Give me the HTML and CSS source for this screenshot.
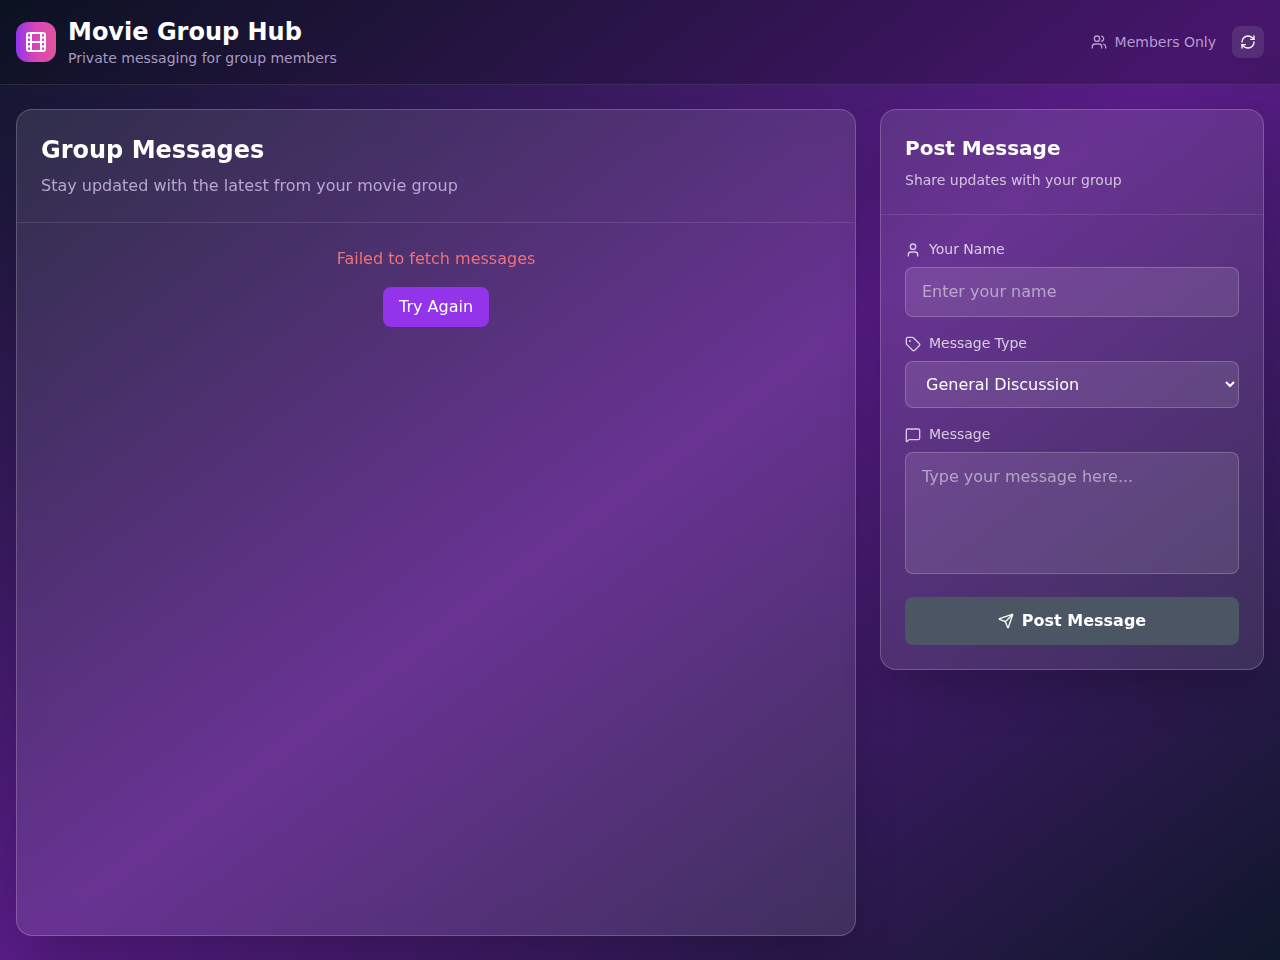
FILE: index.html
```html
<!DOCTYPE html>
<html lang="en">
<head>
<meta charset="utf-8">
<meta name="viewport" content="width=device-width, initial-scale=1">
<title>Movie Group Hub</title>
<link rel="stylesheet" href="styles.css">
</head>
<body>
<div class="page">
  <header class="topbar">
    <div class="topbar-inner">
      <div class="brand">
        <div class="logo">
          <svg class="icon icon-lg" viewBox="0 0 24 24" aria-hidden="true"><rect width="18" height="18" x="3" y="3" rx="2"/><path d="M7 3v18M3 7.500h4M3 12h18M3 16.500h4M17 3v18M17 7.500h4M17 16.500h4"/></svg>
        </div>
        <div>
          <h1 class="brand-title">Movie Group Hub</h1>
          <p class="brand-subtitle">Private messaging for group members</p>
        </div>
      </div>
      <div class="actions">
        <div class="members">
          <svg class="icon" viewBox="0 0 24 24" aria-hidden="true"><path d="M16 21v-2a4 4 0 0 0-4-4H6a4 4 0 0 0-4 4v2"/><circle cx="9" cy="7" r="4"/><path d="M22 21v-2a4 4 0 0 0-3-3.870"/><path d="M16 3.130a4 4 0 0 1 0 7.750"/></svg>
          <span>Members Only</span>
        </div>
        <button class="refresh" type="button" aria-label="Refresh">
          <svg class="icon" viewBox="0 0 24 24" aria-hidden="true"><path d="M3 12a9 9 0 0 1 9-9 9.750 9.750 0 0 1 6.740 2.740L21 8"/><path d="M21 3v5h-5"/><path d="M21 12a9 9 0 0 1-9 9 9.750 9.750 0 0 1-6.740-2.740L3 16"/><path d="M8 16H3v5"/></svg>
        </button>
      </div>
    </div>
  </header>

  <main class="content">
    <section class="card messages">
      <div class="card-head">
        <h2 class="messages-title">Group Messages</h2>
        <p class="messages-subtitle">Stay updated with the latest from your movie group</p>
      </div>
      <div class="card-body status">
        <p class="error">Failed to fetch messages</p>
        <button class="retry" type="button">Try Again</button>
      </div>
    </section>

    <aside class="card composer">
      <div class="card-head">
        <h2 class="composer-title">Post Message</h2>
        <p class="composer-subtitle">Share updates with your group</p>
      </div>
      <form class="card-body form">
        <div>
          <label class="label" for="name"><svg class="icon label-icon" viewBox="0 0 24 24" aria-hidden="true"><path d="M19 21v-2a4 4 0 0 0-4-4H9a4 4 0 0 0-4 4v2"/><circle cx="12" cy="7" r="4"/></svg>Your Name</label>
          <input class="field" id="name" type="text" placeholder="Enter your name">
        </div>
        <div>
          <label class="label" for="type"><svg class="icon label-icon" viewBox="0 0 24 24" aria-hidden="true"><path d="M12.586 2.586A2 2 0 0 0 11.172 2H4a2 2 0 0 0-2 2v7.172a2 2 0 0 0 .586 1.414l8.704 8.704a2.426 2.426 0 0 0 3.420 0l6.580-6.580a2.426 2.426 0 0 0 0-3.420z"/><circle cx="7.500" cy="7.500" r=".5" fill="currentColor"/></svg>Message Type</label>
          <select class="field" id="type"><option>General Discussion</option></select>
        </div>
        <div>
          <label class="label" for="message"><svg class="icon label-icon" viewBox="0 0 24 24" aria-hidden="true"><path d="M22 17a2 2 0 0 1-2 2H6.828a2 2 0 0 0-1.414.586l-2.202 2.202A.71.71 0 0 1 2 21.286V5a2 2 0 0 1 2-2h16a2 2 0 0 1 2 2z"/></svg>Message</label>
          <textarea class="field" id="message" rows="4" placeholder="Type your message here..."></textarea>
        </div>
        <button class="submit" type="submit" disabled>
          <svg class="icon" viewBox="0 0 24 24" aria-hidden="true"><path d="M14.536 21.686a.5.5 0 0 0 .937-.024l6.500-19a.496.496 0 0 0-.635-.635l-19 6.500a.5.5 0 0 0-.024.937l7.930 3.180a2 2 0 0 1 1.112 1.110z"/><path d="m21.854 2.147-10.940 10.939"/></svg>
          <span>Post Message</span>
        </button>
      </form>
    </aside>
  </main>
</div>
</body>
</html>
```

FILE: styles.css
```css
* { box-sizing: border-box; }

body, h1, h2, p { margin: 0; }

body {
  font: 16px/24px "DejaVu Sans", sans-serif;
  color: #fff;
}

button, input, select, textarea {
  font: inherit;
  color: inherit;
}

.page {
  min-height: 100vh;
  display: flex;
  flex-direction: column;
  background: linear-gradient(to bottom right, #0f172a, #581c87, #0f172a);
}

.icon {
  width: 16px;
  height: 16px;
  flex: none;
  fill: none;
  stroke: currentColor;
  stroke-width: 2;
  stroke-linecap: round;
  stroke-linejoin: round;
}

.icon-lg { width: 24px; height: 24px; }

.topbar {
  background: rgba(0, 0, 0, 0.2);
  border-bottom: 1px solid rgba(255, 255, 255, 0.1);
}

.topbar-inner {
  width: 100%;
  max-width: 1280px;
  margin: 0 auto;
  padding: 16px;
  display: flex;
  align-items: center;
  justify-content: space-between;
}

.brand { display: flex; align-items: center; gap: 12px; }

.logo {
  display: flex;
  padding: 8px;
  border-radius: 12px;
  background: linear-gradient(to right, #9333ea, #d946b8 50%, #e0559a);
}

.brand-title { font-size: 24px; line-height: 32px; }

.brand-subtitle {
  font-size: 14px;
  line-height: 20px;
  color: rgba(233, 213, 255, 0.7);
}

.actions { display: flex; align-items: center; gap: 16px; }

.members {
  display: flex;
  align-items: center;
  gap: 8px;
  font-size: 14px;
  line-height: 20px;
  color: rgba(233, 213, 255, 0.7);
}

.refresh {
  display: flex;
  padding: 8px;
  border: 0;
  border-radius: 8px;
  background: rgba(255, 255, 255, 0.1);
}

.content {
  flex: 1;
  width: 100%;
  max-width: 1280px;
  margin: 0 auto;
  padding: 24px 16px;
  display: flex;
  align-items: flex-start;
  gap: 24px;
}

.card {
  border: 1px solid rgba(255, 255, 255, 0.2);
  border-radius: 16px;
  background: rgba(255, 255, 255, 0.1);
  box-shadow: 0 25px 50px -12px rgba(0, 0, 0, 0.25);
  backdrop-filter: blur(16px);
}

.messages { flex: 1; align-self: stretch; }

.composer { flex: none; width: 384px; }

.card-head {
  padding: 24px;
  border-bottom: 1px solid rgba(255, 255, 255, 0.1);
}

.card-body { padding: 24px; }

.messages-title { font-size: 24px; line-height: 32px; }

.messages-subtitle { margin-top: 8px; color: rgba(233, 213, 255, 0.7); }

.composer-title { font-size: 20px; line-height: 28px; }

.composer-subtitle {
  margin-top: 8px;
  font-size: 14px;
  line-height: 20px;
  color: rgba(255, 255, 255, 0.7);
}

.status { text-align: center; }

.error { margin-bottom: 16px; color: #f07178; }

.retry {
  padding: 8px 16px;
  border: 0;
  border-radius: 8px;
  background: #9333ea;
}

.form { display: flex; flex-direction: column; gap: 16px; }

.label {
  display: block;
  margin-bottom: 8px;
  font-size: 14px;
  line-height: 20px;
  color: rgba(255, 255, 255, 0.75);
}

.label-icon { margin-right: 8px; vertical-align: middle; }

.field {
  width: 100%;
  padding: 12px 16px;
  border: 1px solid rgba(255, 255, 255, 0.2);
  border-radius: 8px;
  background: rgba(255, 255, 255, 0.1);
}

select.field option { color: #111827; }

textarea.field { resize: none; }

.field::placeholder { color: rgba(255, 255, 255, 0.5); }

.submit {
  display: flex;
  align-items: center;
  justify-content: center;
  gap: 8px;
  padding: 12px 24px;
  border: 0;
  border-radius: 8px;
  background: #4b5563;
  font-weight: 700;
}
```
